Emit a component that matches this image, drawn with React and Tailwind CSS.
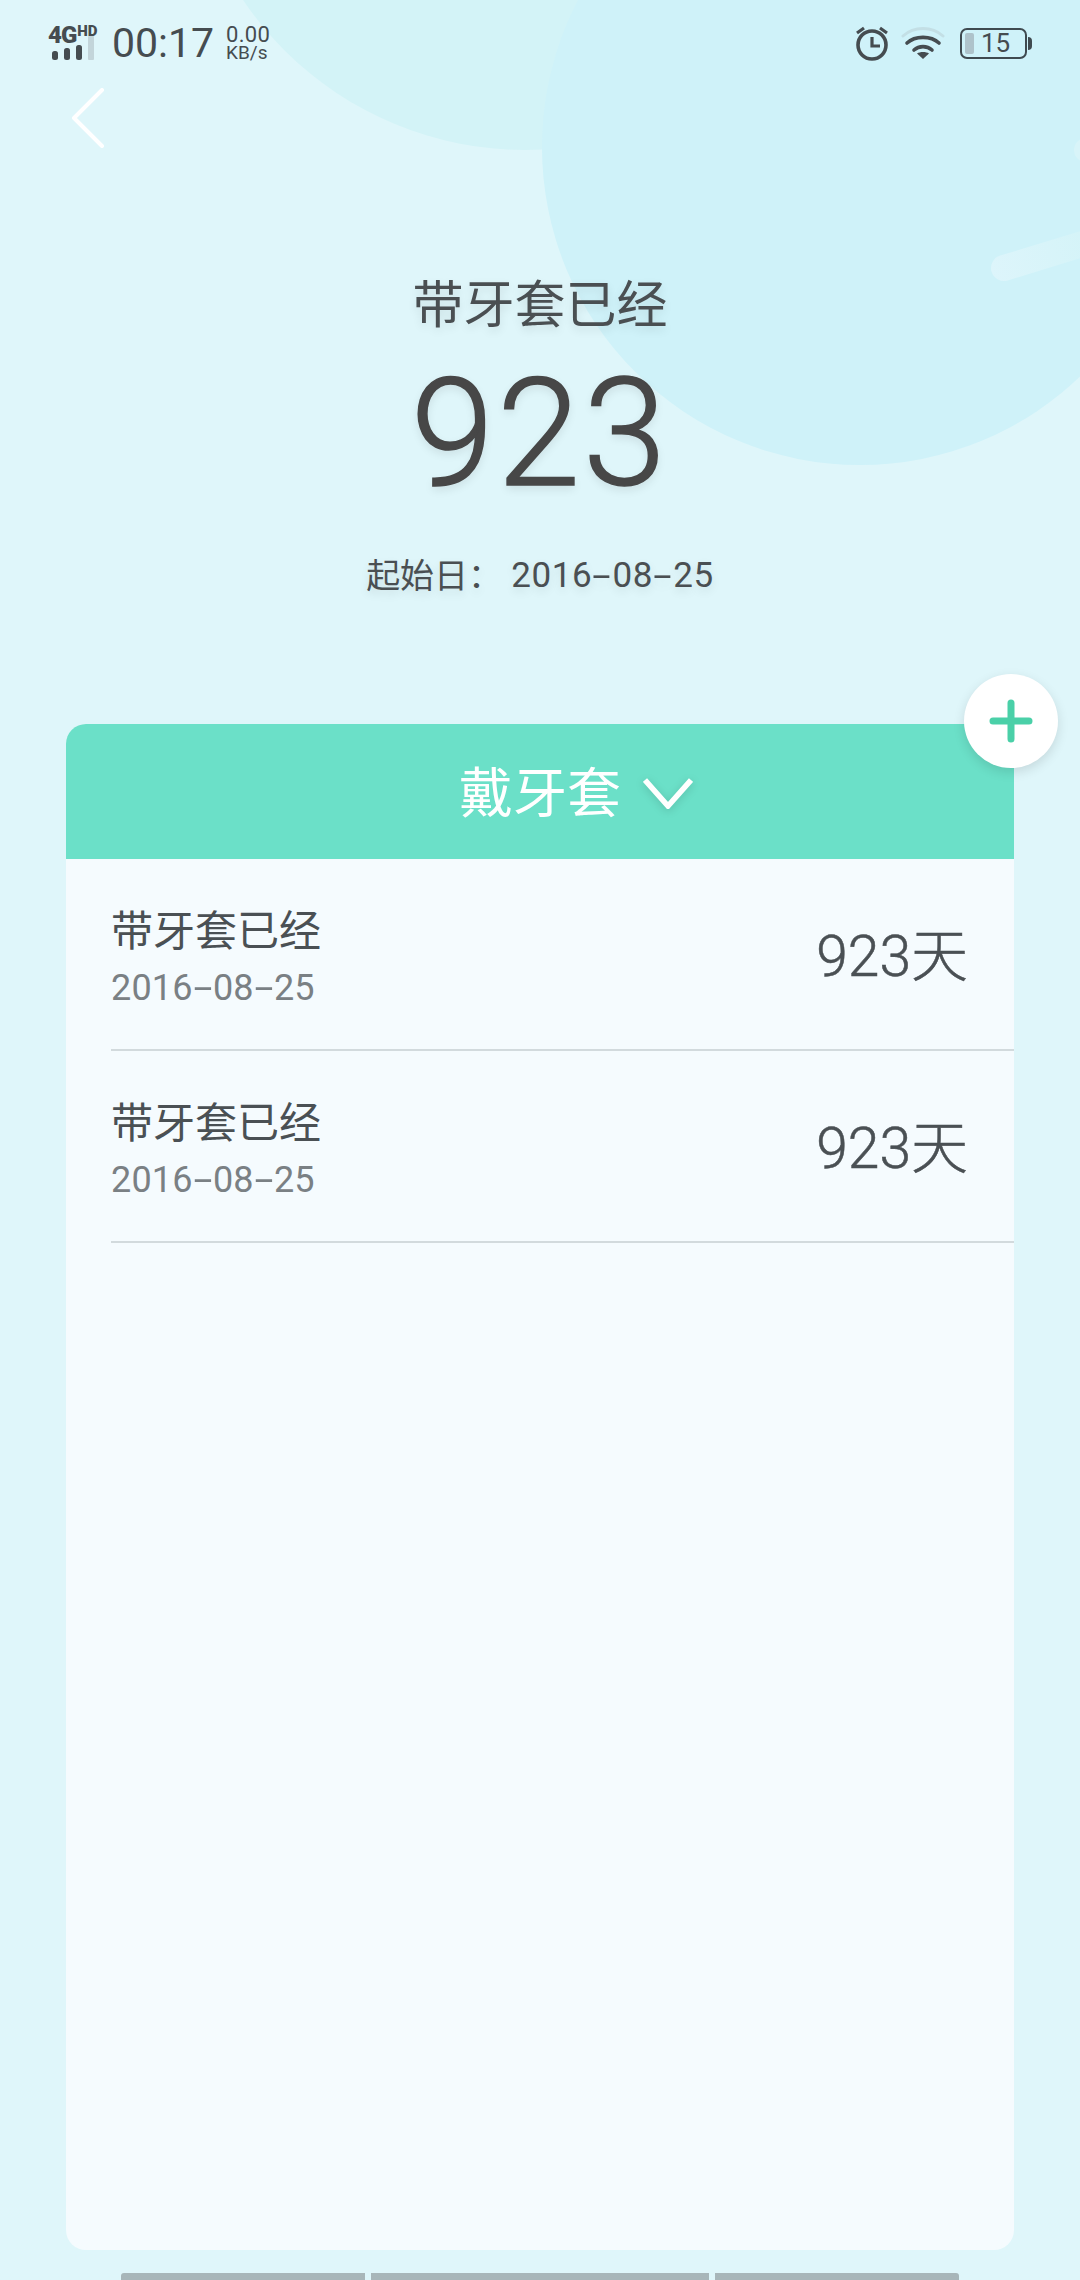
const FONT = "font-['Roboto','Noto_Sans_CJK_SC',sans-serif]";

const rows = [
  { title: "带牙套已经", date: "2016-08-25", days: "923天" },
  { title: "带牙套已经", date: "2016-08-25", days: "923天" },
];

// the hyphens are longer in the reference than in Roboto
function DateText({ value }) {
  const parts = value.split("-");
  return (
    <span>
      {parts.map((p, i) => (
        <span key={i}>
          {i > 0 && <span className="inline-block px-[5px] scale-x-[1.9]">-</span>}
          {p}
        </span>
      ))}
    </span>
  );
}

function SignalIcon() {
  return (
    <div className="flex flex-col w-[52px]">
      <div className="flex items-start h-[18px] font-black text-[#454c50]">
        <span className="text-[24px] leading-[18px] tracking-[-1px]">4G</span>
        <span className="text-[15px] leading-[11px] ml-[1px]">HD</span>
      </div>
      <svg width="52" height="24" viewBox="0 0 52 24" className="-mt-[8px]">
        <rect x="4" y="15" width="6" height="9" rx="2.5" fill="#454c50" />
        <rect x="16" y="12" width="6" height="12" rx="2.5" fill="#454c50" />
        <rect x="28" y="9" width="6" height="15" rx="2.5" fill="#454c50" />
        <rect x="40" y="0" width="6" height="24" rx="1" fill="#c3d5da" />
      </svg>
    </div>
  );
}

function AlarmIcon() {
  return (
    <svg width="34" height="36" viewBox="0 0 34 36" fill="none" stroke="#454c50">
      <circle cx="17" cy="20" r="14" strokeWidth="3.6" />
      <path d="M17 12v9h8" strokeWidth="3.2" />
      <path d="M2 8l7-5M32 8l-7-5" strokeWidth="3.2" />
    </svg>
  );
}

function WifiIcon() {
  return (
    <svg width="44" height="34" viewBox="0 0 44 34" fill="none" strokeLinecap="round">
      <path d="M2 10C13 0 31 0 42 10" stroke="#c3dfe5" strokeWidth="3" />
      <path d="M6 17C14 9.5 30 9.5 38 17" stroke="#454c50" strokeWidth="3.6" />
      <path d="M13 24C18 19.5 26 19.5 31 24" stroke="#454c50" strokeWidth="3.6" />
      <path d="M16 27.5C19 25.5 25 25.5 28 27.5L22 33Z" fill="#454c50" />
    </svg>
  );
}

function BatteryIcon() {
  return (
    <div className="flex items-center">
      <div className="flex items-center w-[67px] h-[31px] rounded-[7px] border-2 border-[#3f4a50] pl-[3px]">
        <div className="w-[9px] h-[21px] rounded-[2px] bg-[#aec3cb]" />
        <span className="ml-[7px] text-[26px] leading-none text-[#454c50]">15</span>
      </div>
      <div className="ml-[1px] w-[4px] h-[13px] rounded-r-[4px] bg-[#3f4a50]" />
    </div>
  );
}

function Row({ title, date, days }) {
  return (
    <div className="ml-[45px] h-[192px] border-b-2 border-[#d2dadd] flex items-center justify-between pr-[46px]">
      <div className="flex flex-col pt-[7px]">
        <span className="text-[42px] leading-[50px] text-[#4a5054]">{title}</span>
        <span className="text-[36px] leading-[42px] mt-[10px] text-[#7a8084] tracking-[0.2px]">
          <DateText value={date} />
        </span>
      </div>
      <span className="mt-[6px] text-[57px] leading-[64px] text-[#4a5054] font-light [-webkit-text-stroke:0.5px_#4a5054]">{days}</span>
    </div>
  );
}

export default function App() {
  return (
    <div className={`relative w-[1080px] h-[2280px] overflow-hidden flex flex-col bg-[#dff6fa] ${FONT}`}>
      {/* background blobs */}
      <div className="absolute left-[185px] -top-[530px] w-[680px] h-[680px] rounded-full bg-[#d3f3f7]" />
      <div className="absolute left-[542px] -top-[171px] w-[636px] h-[636px] rounded-full bg-[#cff2f9]" />
      <div className="absolute left-[1074px] top-[138px] w-[30px] h-[24px] rounded-full bg-[#d8f4f9]" />
      <div className="absolute left-[991px] top-[255px] w-[130px] h-[26px] rounded-full origin-[13px_13px] -rotate-[17deg] bg-gradient-to-r from-[#ddf5fb] to-[#d2f3f7]" />

      {/* status bar */}
      <div className="relative flex items-center justify-between h-[86px] pl-[48px] pr-[48px]">
        <div className="flex items-center">
          <SignalIcon />
          <span className="ml-[12px] text-[41px] leading-none text-[#454c50]">00:17</span>
          <div className="ml-[12px] flex flex-col text-[#454c50]">
            <span className="text-[22px] leading-[19px] tracking-[0.3px]">0.00</span>
            <span className="text-[19px] leading-[18px]">KB/s</span>
          </div>
        </div>
        <div className="flex items-center">
          <AlarmIcon />
          <div className="ml-[12px]"><WifiIcon /></div>
          <div className="ml-[15px]"><BatteryIcon /></div>
        </div>
      </div>

      {/* back */}
      <div className="relative pl-[70px] mt-[2px] h-[60px]">
        <svg width="36" height="60" viewBox="0 0 36 60" fill="none" stroke="#ffffff" strokeWidth="4" strokeLinecap="round" strokeLinejoin="round">
          <path d="M32 2L4 30l28 28" />
        </svg>
      </div>

      {/* hero */}
      <div className="relative flex flex-col items-center text-[#474747] [text-shadow:0_4px_10px_rgba(0,0,0,0.1)]">
        <span className="mt-[128px] text-[51px] leading-[60px] text-[#4a4f52]">带牙套已经</span>
        <span className="mt-[23px] text-[150px] leading-[150px] font-light tracking-[3px] [-webkit-text-stroke:1.5px_#474747]">923</span>
        <span className="mt-[47px] flex items-center text-[34px] leading-[40px] text-[#4a4f52]">
          <span>起始日：</span>
          <span className="ml-[9px] text-[35px] tracking-[0.6px]">
            <DateText value="2016-08-25" />
          </span>
        </span>
      </div>

      {/* card */}
      <div className="relative mt-[128px] mx-[66px] flex-1 flex flex-col rounded-[20px] bg-[#f5fbfe]">
        <div className="h-[135px] rounded-t-[20px] bg-[#6be0c8] flex items-center justify-center pt-[6px]">
          <span className="relative text-[54px] leading-[60px] text-white">
            戴牙套
            <svg width="50" height="32" viewBox="0 0 50 32" fill="none" stroke="#ffffff" strokeWidth="5.5" className="absolute left-full top-[12px] ml-[22px] drop-shadow-[0_2px_4px_rgba(0,0,0,0.15)]">
              <path d="M2 3l23 26L48 3" />
            </svg>
          </span>
        </div>
        {rows.map((row, i) => (
          <Row key={i} {...row} />
        ))}
        <button className="absolute -top-[50px] -right-[44px] w-[94px] h-[94px] rounded-full bg-white shadow-[0_4px_12px_rgba(0,0,0,0.12)] flex items-center justify-center">
          <svg width="44" height="44" viewBox="0 0 44 44" stroke="#4ad0a8" strokeWidth="7" strokeLinecap="round">
            <path d="M22 4v36M4 22h36" />
          </svg>
        </button>
      </div>

      {/* bottom edge */}
      <div className="mt-[23px] ml-[121px] flex gap-[6px] h-[7px]">
        <div className="w-[244px] rounded-tl-[3px] bg-[#a8b6b9]" />
        <div className="w-[338px] bg-[#a8b6b9]" />
        <div className="w-[244px] rounded-tr-[3px] bg-[#a8b6b9]" />
      </div>
    </div>
  );
}
